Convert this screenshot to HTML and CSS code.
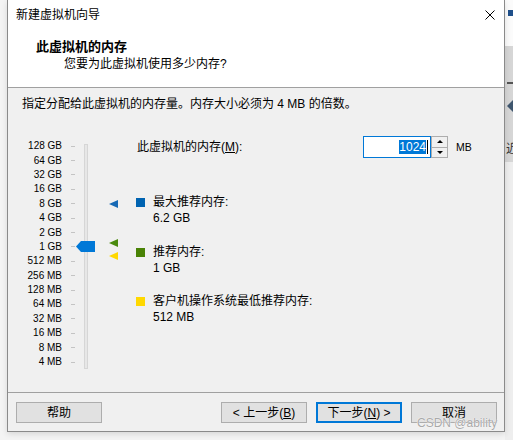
FILE: index.html
```html
<!DOCTYPE html>
<html lang="zh-CN">
<head>
<meta charset="utf-8">
<title>新建虚拟机向导</title>
<link rel="stylesheet" href="styles.css">
</head>
<body>
<div class="screen">
  <div class="backdrop"><span class="bd-icon"></span><span class="bd-dash"></span><span class="bd-arrow"></span><span class="bd-char">近</span></div>
  <div class="window">
    <div class="titlebar">
      <span class="title">新建虚拟机向导</span>
      <span class="close"><svg width="10" height="10" viewBox="0 0 10 10"><path d="M0.5 0.5L9.5 9.5M9.5 0.5L0.5 9.5" stroke="#000" stroke-width="1" fill="none"/></svg></span>
    </div>
    <div class="header">
      <div class="heading">此虚拟机的内存</div>
      <div class="subheading">您要为此虚拟机使用多少内存?</div>
    </div>
    <div class="body">
      <p class="desc">指定分配给此虚拟机的内存量。内存大小必须为 4 MB 的倍数。</p>
      <div class="content">
        <div class="slider">
          <div class="scale">
            <span class="lbl">128 GB</span><i class="tick"></i>
            <span class="lbl">64 GB</span><i class="tick"></i>
            <span class="lbl">32 GB</span><i class="tick"></i>
            <span class="lbl">16 GB</span><i class="tick"></i>
            <span class="lbl">8 GB</span><i class="tick"></i>
            <span class="lbl">4 GB</span><i class="tick"></i>
            <span class="lbl">2 GB</span><i class="tick"></i>
            <span class="lbl">1 GB</span><i class="tick"></i>
            <span class="lbl">512 MB</span><i class="tick"></i>
            <span class="lbl">256 MB</span><i class="tick"></i>
            <span class="lbl">128 MB</span><i class="tick"></i>
            <span class="lbl">64 MB</span><i class="tick"></i>
            <span class="lbl">32 MB</span><i class="tick"></i>
            <span class="lbl">16 MB</span><i class="tick"></i>
            <span class="lbl">8 MB</span><i class="tick"></i>
            <span class="lbl">4 MB</span><i class="tick"></i>
          </div>
          <div class="track"></div>
          <div class="thumb"></div>
          <div class="marker marker-max" style="top: 64px"></div>
          <div class="marker marker-rec" style="top: 103px"></div>
          <div class="marker marker-min" style="top: 116px"></div>
        </div>
        <div class="settings">
          <div class="mem-row">
            <span class="mem-label">此虚拟机的内存(<u>M</u>):</span>
            <div class="spinbox">
              <div class="spin-input"><span class="sel">1024</span><span class="caret"></span></div>
              <div class="spin-btns">
                <span class="spin-btn"><i class="arr-up"></i></span>
                <span class="spin-btn"><i class="arr-down"></i></span>
              </div>
            </div>
            <span class="unit">MB</span>
          </div>
          <div class="legend">
            <div class="legend-item">
              <span class="swatch swatch-max"></span>
              <div class="legend-text"><div>最大推荐内存:</div><div>6.2 GB</div></div>
            </div>
            <div class="legend-item">
              <span class="swatch swatch-rec"></span>
              <div class="legend-text"><div>推荐内存:</div><div>1 GB</div></div>
            </div>
            <div class="legend-item">
              <span class="swatch swatch-min"></span>
              <div class="legend-text"><div>客户机操作系统最低推荐内存:</div><div>512 MB</div></div>
            </div>
          </div>
        </div>
      </div>
    </div>
    <div class="footer">
      <button class="btn">帮助</button>
      <span class="spacer"></span>
      <button class="btn">&lt; 上一步(<u>B</u>)</button>
      <button class="btn btn-default">下一步(<u>N</u>) &gt;</button>
      <button class="btn">取消</button>
    </div>
  </div>
  <div class="watermark">CSDN @ability</div>
</div>
</body>
</html>
```

FILE: styles.css
```css
* { box-sizing: border-box; }
html, body { margin: 0; padding: 0; }
body {
  width: 513px;
  height: 440px;
  overflow: hidden;
  background: #f3f3f3;
  font-family: "Liberation Sans", "Noto Sans CJK SC", sans-serif;
  font-size: 12px;
  color: #000;
}
.screen {
  position: relative;
  width: 513px;
  height: 440px;
  background: #f4f4f4;
}
.backdrop {
  position: absolute;
  left: 505px;
  top: 0;
  width: 8px;
  height: 440px;
  background: linear-gradient(#fbfbfb 0 46px, #d6d6d6 46px 162px, #eeeeee 162px);
}
.bd-icon { position: absolute; left: 3px; top: 10px; width: 5px; height: 6px; background: #1f4f8a; }
.bd-dash { position: absolute; left: 2px; top: 82px; width: 6px; height: 2px; background: #555; }
.bd-arrow { position: absolute; left: 2px; top: 100px; width: 0; height: 0; border-right: 6px solid #3f566e; border-top: 6px solid transparent; border-bottom: 6px solid transparent; }
.bd-char { position: absolute; left: 1px; top: 140px; font-size: 12px; line-height: 16px; font-family: "Noto Sans CJK SC", sans-serif; color: #333; }

.window {
  position: relative;
  margin-left: 7px;
  width: 498px;
  height: 432px;
  border: 1px solid #8a8a8a;
  border-top: 0;
  background: #f0f0f0;
  display: flex;
  flex-direction: column;
  box-shadow: 0 2px 6px rgba(0, 0, 0, 0.12);
}
.titlebar {
  height: 30px;
  flex: none;
  background: #fff;
  display: flex;
  align-items: center;
  padding-left: 8px;
}
.title { line-height: 16px; }
.close {
  margin-left: auto;
  margin-right: 9px;
  width: 10px;
  height: 10px;
  display: block;
}
.close svg { display: block; }
.header {
  height: 58px;
  flex: none;
  background: #fff;
  border-bottom: 1px solid #a0a0a0;
  padding: 9px 0 0 28px;
}
.heading { font-size: 13px; font-weight: bold; line-height: 16px; }
.subheading { line-height: 16px; margin-top: 1px; padding-left: 28px; }

.body {
  height: 304px;
  flex: none;
  padding-top: 8px;
}
.desc { margin: 0; padding-left: 14px; line-height: 16px; }
.content { display: flex; margin-top: 24px; }

.slider {
  position: relative;
  flex: none;
  width: 128px;
  display: flex;
  align-items: flex-start;
  padding-top: 3px;
}
.scale {
  display: grid;
  grid-template-columns: 54px 4px;
  grid-auto-rows: 14.4px;
  column-gap: 9px;
  align-items: center;
}
.lbl {
  text-align: right;
  font-size: 10px;
  line-height: 14px;
  white-space: nowrap;
}
.tick { display: block; height: 1px; background: #c4c4c4; }
.track {
  margin-left: 9px;
  margin-top: 5px;
  width: 4px;
  height: 225px;
  border: 1px solid #d6d6d6;
  background: #e7e7e7;
}
.thumb {
  position: absolute;
  left: 68px;
  top: 105px;
  width: 19px;
  height: 11px;
  background: #0078d7;
  clip-path: polygon(0 50%, 5px 0, 100% 0, 100% 100%, 5px 100%);
}
.marker {
  position: absolute;
  left: 101px;
  width: 9px;
  height: 8px;
  clip-path: polygon(0 50%, 100% 0, 100% 100%);
}
.marker-max { background: #1769b5; }
.marker-rec { background: #4a8a0e; }
.marker-min { background: #ffd800; }

.settings { flex: 1; }
.mem-row { display: flex; align-items: center; height: 22px; }
.mem-label { width: 227px; padding-left: 1px; line-height: 16px; flex: none; }
.spinbox { display: flex; flex: none; }
.spin-input {
  width: 68px;
  height: 22px;
  border: 1px solid #0078d7;
  background: #fff;
  display: flex;
  align-items: center;
  justify-content: flex-end;
  padding-right: 2px;
}
.sel {
  background: #0078d7;
  color: #fff;
  font-size: 12px;
  line-height: 14px;
  height: 14px;
}
.caret { width: 1px; height: 14px; background: #000; margin-left: 1px; }
.spin-btns {
  width: 17px;
  height: 22px;
  border: 1px solid #adadad;
  display: flex;
  flex-direction: column;
  background: #f0f0f0;
}
.spin-btn {
  flex: 1;
  display: flex;
  align-items: center;
  justify-content: center;
}
.spin-btn + .spin-btn { border-top: 1px solid #adadad; }
.arr-up { width: 0; height: 0; border-left: 3px solid transparent; border-right: 3px solid transparent; border-bottom: 3px solid #000; }
.arr-down { width: 0; height: 0; border-left: 3px solid transparent; border-right: 3px solid transparent; border-top: 3px solid #000; }
.unit { margin-left: 8px; font-size: 10.5px; line-height: 16px; }

.legend { margin-top: 36px; display: flex; flex-direction: column; gap: 17.5px; }
.legend-item { display: flex; align-items: flex-start; }
.swatch { width: 9px; height: 9px; margin-top: 4px; flex: none; }
.swatch-max { background: #0063b1; }
.swatch-rec { background: #498205; }
.swatch-min { background: #ffd800; }
.legend-text { margin-left: 8px; line-height: 16px; }

.footer {
  flex: 1;
  border-top: 1px solid #a0a0a0;
  padding: 9px 7px 0 8px;
  display: flex;
  align-items: flex-start;
  gap: 9px;
}
.spacer { flex: 1; }
.btn {
  width: 86px;
  height: 21px;
  padding: 0;
  margin: 0;
  border: 1px solid #adadad;
  background: #e1e1e1;
  font-family: "Liberation Sans", "Noto Sans CJK SC", sans-serif;
  font-size: 12px;
  line-height: 16px;
  color: #000;
  display: flex;
  align-items: center;
  justify-content: center;
}
.btn-default { border: 2px solid #0078d7; }

.watermark {
  position: absolute;
  left: 417px;
  top: 415px;
  font-size: 12px;
  line-height: 16px;
  color: #a9a9a9;
  text-shadow: 0 0 1px #fff, 0 0 1px #fff;
}
```
